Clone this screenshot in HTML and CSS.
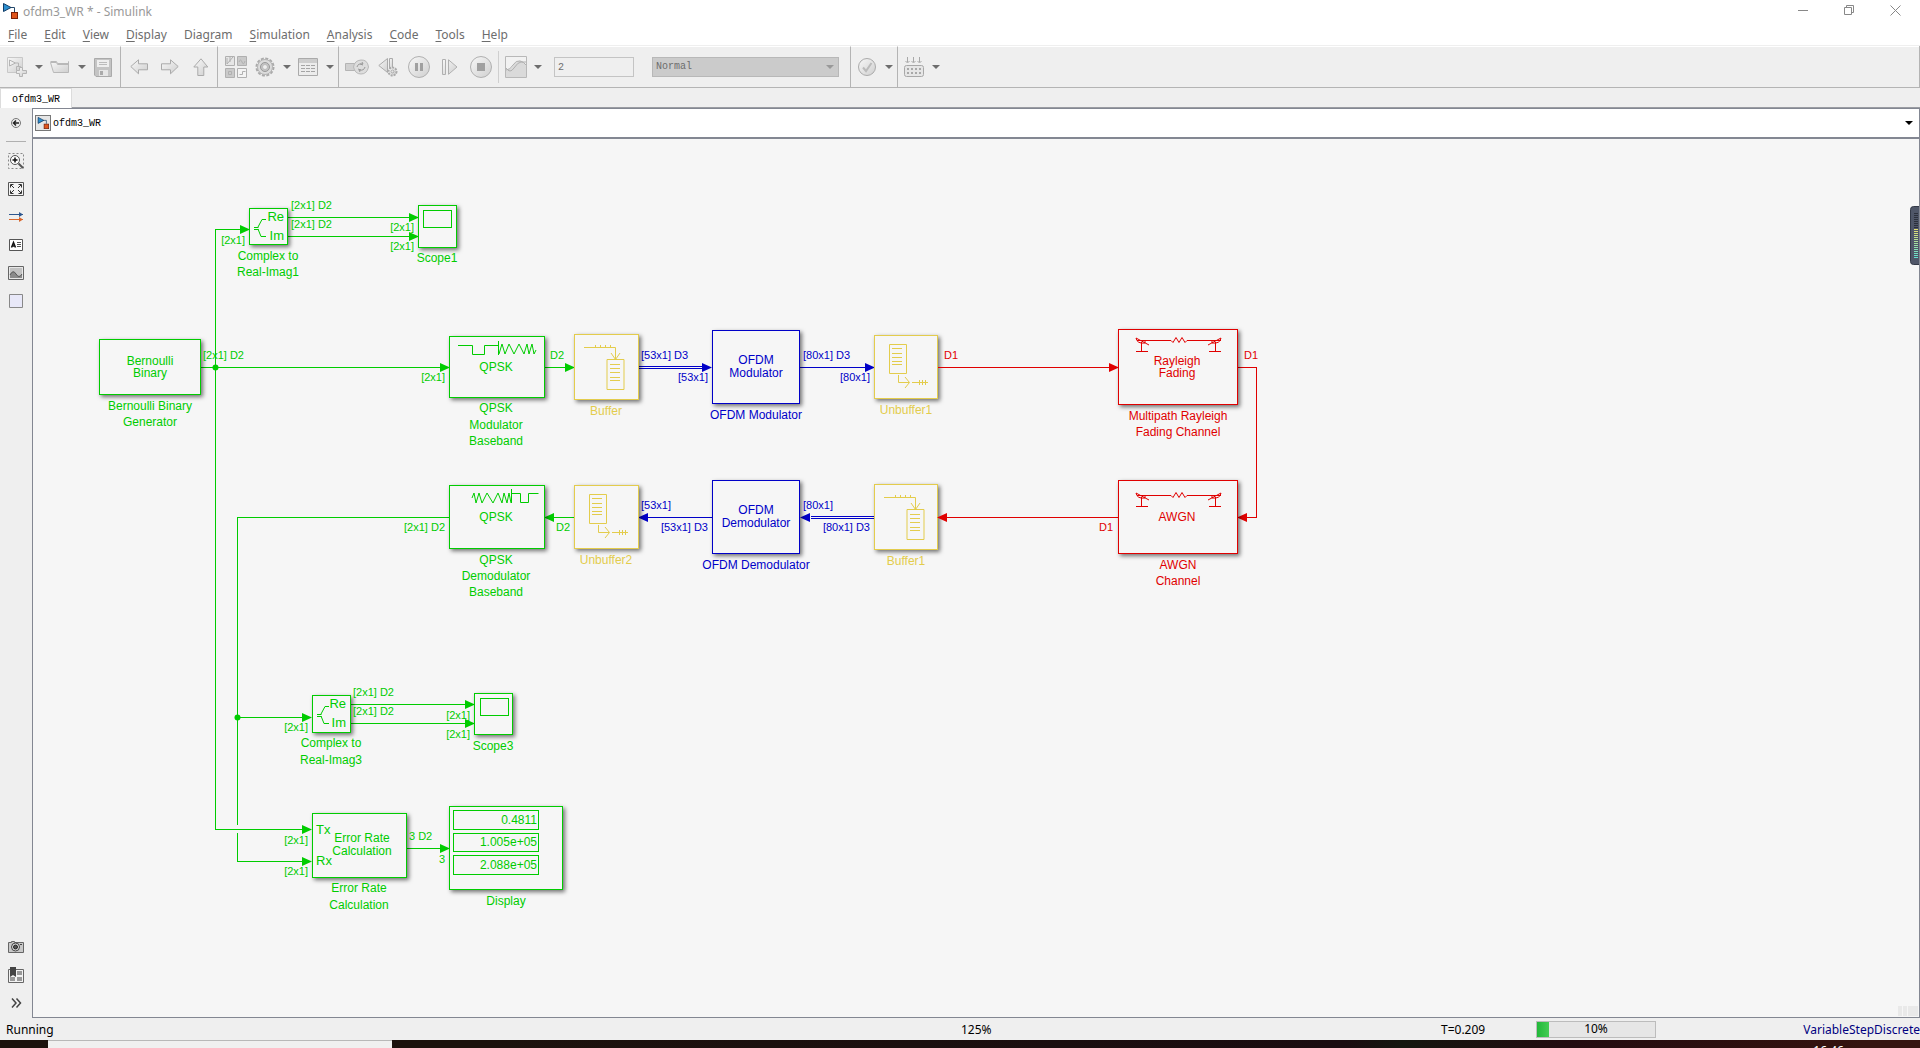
FILE: index.html
```html
<!DOCTYPE html>
<html lang="en">
<head>
<meta charset="utf-8">
<title>ofdm3_WR * - Simulink</title>
<link rel="stylesheet" href="styles.css">
</head>
<body>
<svg class="defs" aria-hidden="true">
  <defs>
    <linearGradient id="soft" x1="0" y1="0" x2="1" y2="1"><stop offset="0" stop-color="#f8f8f8"/><stop offset="1" stop-color="#cfcfcf"/></linearGradient>
    <linearGradient id="meterfill" x1="0" y1="0" x2="0" y2="1"><stop offset="0" stop-color="#e8e070"/><stop offset="1" stop-color="#60e0d0"/></linearGradient>
    <symbol id="logo" viewBox="0 0 16 16"><path d="M8 4.500h4.500V9" fill="none" stroke="#24486a"/><path d="M1.500 .5v8L9 4.500z" fill="#2b8fd0" stroke="#123c66"/><rect x="9.500" y="9.500" width="6" height="6" fill="#e0551c" stroke="#7a2008"/></symbol>
    <symbol id="caret" viewBox="0 0 8 4"><path d="M0 0h8L4 4z" fill="currentColor"/></symbol>
    <symbol id="complex" viewBox="0 0 39 37" overflow="visible"><path d="M4 19.500h4.500M4 21.500h4.500M8 19l4-7.500h4M8 21l3 7.500h5" fill="none" stroke="currentColor"/></symbol>
    <symbol id="buffer" viewBox="0 0 64 65" overflow="visible"><path d="M10 13.500h31.500v12M37 19l4.500 6.500L46 19M21.500 11v2M26.500 11v2M31.500 11v2M36.500 11v2M33 25.500h17v30H33zM36 30.500h10M36 34.500h10M36 38.500h10M36 43.500h10M36 46.500h10" fill="none" stroke="currentColor"/></symbol>
    <symbol id="unbuffer" viewBox="0 0 64 63" overflow="visible"><path d="M15.500 9.500h17v29h-17zM18 13.500h10M18 18.500h10M18 22.500h10M18 26.500h10M18 29.500h10M24.500 40v7.500H35M31 42l4.500 5.500L31 53M38 47.500h16M45.500 45v5M48.500 45v5M51.500 45v5" fill="none" stroke="currentColor"/></symbol>
    <symbol id="channel" viewBox="0 0 86 14" overflow="visible"><path d="M1 2.500h34l2 2 3-5 3 5 3-5 3 5 2-2h34M0 0l13 7M0 0q1 6 9 5M9 5V2M5.500 4v9M0 13.500h12M85 0L72 7M85 0q-1 6-9 5M76 5V2M79.500 4v9M73 13.500h12" fill="none" stroke="currentColor"/></symbol>
  </defs>
</svg>

<header class="titlebar">
  <svg class="app-icon" width="16" height="16"><use href="#logo"/></svg>
  <h1 class="title">ofdm3_WR * - Simulink</h1>
  <div class="window-buttons">
    <button aria-label="Minimize"><svg width="11" height="11"><path d="M0 5.500h10" stroke="#888" fill="none"/></svg></button>
    <button aria-label="Restore"><svg width="11" height="11"><path d="M.5 2.500h7v7h-7zM2.500 2.500v-2h7v7h-2" stroke="#888" fill="none"/></svg></button>
    <button aria-label="Close"><svg width="11" height="11"><path d="M.5 .5l10 10M10.500 .5l-10 10" stroke="#888" fill="none"/></svg></button>
  </div>
</header>

<nav class="menubar">
  <a href="#file"><u>F</u>ile</a>
  <a href="#edit"><u>E</u>dit</a>
  <a href="#view"><u>V</u>iew</a>
  <a href="#display"><u>D</u>isplay</a>
  <a href="#diagram">Diag<u>r</u>am</a>
  <a href="#simulation"><u>S</u>imulation</a>
  <a href="#analysis"><u>A</u>nalysis</a>
  <a href="#code"><u>C</u>ode</a>
  <a href="#tools"><u>T</u>ools</a>
  <a href="#help"><u>H</u>elp</a>
</nav>

<div class="toolbar">
  <div class="group group-file">
    <button class="tool" aria-label="New model"><svg width="20" height="20" fill="url(#soft)" stroke="#b4b4b4"><path d="M.5 .5h15v15H.5z" stroke="#c8c8c8"/><path d="M2.500 3v6l6-3zM8.500 6h3v3M9.500 9.500h4v4h-4z"/><path d="M12.500 10.500h3v3h4v3h-4v3h-3v-3h-3v-3h3z"/></svg></button>
    <button class="drop" aria-label="New options"><svg width="8" height="4"><use href="#caret"/></svg></button>
    <button class="tool" aria-label="Open"><svg width="21" height="14" fill="url(#soft)" stroke="#b8b8b8"><path d="M.5 1.500h6l1 2h11v2"/><path d="M18.500 1.500v11h-15l-3-10h6l1 2h11z"/></svg></button>
    <button class="drop" aria-label="Open options"><svg width="8" height="4"><use href="#caret"/></svg></button>
    <button class="tool" aria-label="Save"><svg width="18" height="19"><path d="M.5 .5h17v18H2l-1.500-1.500z" fill="#c4c4c4" stroke="#aaa"/><path d="M3 2h12v7H3z" fill="#eee"/><path d="M5 4.500h8M5 6.500h8" stroke="#bbb"/><path d="M5 12h9v6H5z" fill="#e6e6e6"/><path d="M6 13h3v4H6z" fill="#aaa"/></svg></button>
  </div>
  <div class="group">
    <button class="tool wide" aria-label="Back"><svg width="18" height="16" fill="url(#soft)" stroke="#aaa"><path d="M.8 7.500L8.500 .8v4h9v6h-9v4z"/></svg></button>
    <button class="tool wide" aria-label="Forward"><svg width="18" height="16" fill="url(#soft)" stroke="#aaa"><path d="M17.200 7.500L9.500 .8v4h-9v6h9v4z"/></svg></button>
    <button class="tool wide" aria-label="Up to parent"><svg width="16" height="18" fill="url(#soft)" stroke="#aaa"><path d="M8 .8L.8 9h4v8.500h6V9h4z"/></svg></button>
  </div>
  <div class="group">
    <button class="tool wide" aria-label="Library browser"><svg width="22" height="22" fill="none" stroke="#b0b0b0"><path d="M.5 .5h9v9h-9z" fill="#e6e6e6"/><path d="M12.500 .5h9v9h-9zM.5 12.500h9v9h-9z" fill="#cacaca"/><path d="M12.500 12.500h9v9h-9z" fill="#f4f4f4"/><path d="M2 2v6l6-7M5 1v5M3.500 15.500h3v3h-3zM14.500 18.500h3v-3h3M14 6q1.500-4 3 0t3-1"/></svg></button>
    <button class="tool" aria-label="Model configuration"><svg width="20" height="20" fill="none"><circle cx="10" cy="10" r="8.500" stroke="#aaa" stroke-width="2" stroke-dasharray="3 1.450"/><circle cx="10" cy="10" r="7.500" fill="#dcdcdc" stroke="#b4b4b4"/><circle cx="10" cy="10" r="4.500" fill="#c4c4c4" stroke="#999"/><circle cx="10" cy="10" r="2.500" fill="#eee" stroke="#bbb"/></svg></button>
    <button class="drop" aria-label="Configuration options"><svg width="8" height="4"><use href="#caret"/></svg></button>
    <button class="tool" aria-label="Model explorer"><svg width="20" height="18"><path d="M.5 .5h19v17H.5z" fill="#ececec" stroke="#aaa"/><path d="M1 1h18v4H1z" fill="#cdcdcd"/><path d="M3 7.500h14M3 10.500h14M3 13.500h14" stroke="#a4a4a4" stroke-dasharray="4 1"/></svg></button>
    <button class="drop" aria-label="Explorer options"><svg width="8" height="4"><use href="#caret"/></svg></button>
  </div>
  <div class="group group-run">
    <button class="tool wide" aria-label="Update diagram"><svg width="24" height="16"><path d="M.5 4.500h11v7H.5z" fill="#d0d0d0" stroke="#b4b4b4"/><path d="M8.500 8q1-6.500 7.500-7t7.500 7q-1.500 7-7.500 7T8.500 8z" fill="#ddd" stroke="#b8b8b8"/><path d="M12 8q1-4 6-3l-1-2M20 8q-1 4-6 3l1 2M15 5l3 1M16 11l-3-1" fill="none" stroke="#999"/></svg></button>
    <button class="tool wide" aria-label="Step back"><svg width="20" height="20" fill="url(#soft)" stroke="#aaa"><path d="M9.500 1.500v14L.8 8.500z"/><path d="M11.500 1.500h3v10h-3z"/><circle cx="14.500" cy="14.500" r="4" stroke-width="2" stroke-dasharray="2 1"/><circle cx="14.500" cy="14.500" r="1.500"/></svg></button>
    <button class="tool wide" aria-label="Pause"><svg width="22" height="22"><circle cx="11" cy="11" r="10.500" fill="url(#soft)" stroke="#b0b0b0"/><path d="M7 7h3v8H7zM12 7h3v8h-3z" fill="#a0a0a0"/></svg></button>
    <button class="tool wide" aria-label="Step forward"><svg width="16" height="16" fill="url(#soft)" stroke="#b0b0b0"><path d="M.5 .5h3v15h-3zM6.500 .8v14.500L15 8z"/></svg></button>
    <button class="tool wide" aria-label="Stop"><svg width="22" height="22"><circle cx="11" cy="11" r="10.500" fill="url(#soft)" stroke="#b0b0b0"/><path d="M7 7h8v8H7z" fill="#a0a0a0"/></svg></button>
    <span class="rule"></span>
    <button class="tool" aria-label="Data inspector"><svg width="22" height="22" fill="none"><path d="M.5 .5h21v21H.5z" fill="#f2f2f2"/><path d="M1 21V14q5 0 8-6 4-5 8-3 4 2 4 5v11z" fill="#dadada"/><path d="M.5 .5h21v21H.5z" stroke="#b8b8b8"/><path d="M1 14q4 0 7-5t7-4 6 4M1 12q4 6 8 0t7-6 5 0" stroke="#b0b0b0"/></svg></button>
    <button class="drop" aria-label="Inspector options"><svg width="8" height="4"><use href="#caret"/></svg></button>
    <input class="stop-time" type="text" value="2" aria-label="Simulation stop time" disabled>
    <div class="mode"><select aria-label="Simulation mode" disabled><option>Normal</option></select><svg width="8" height="4"><use href="#caret"/></svg></div>
  </div>
  <div class="group">
    <button class="tool" aria-label="Model advisor"><svg width="18" height="18"><circle cx="9" cy="9" r="8.500" fill="url(#soft)" stroke="#aaa"/><path d="M5 9.500l3 3.500 5.500-8" fill="none" stroke="#bbb" stroke-width="2"/></svg></button>
    <button class="drop" aria-label="Advisor options"><svg width="8" height="4"><use href="#caret"/></svg></button>
  </div>
  <div class="group group-build">
    <button class="tool" aria-label="Build model"><svg width="20" height="20" fill="none" stroke="#a8a8a8"><path d="M3.500 0v5M9.500 0v5M15.500 0v5M1.500 4l2 2 2-2M7.500 4l2 2 2-2M13.500 4l2 2 2-2"/><rect x=".5" y="8.500" width="19" height="11" rx="2" fill="#e6e6e6"/><path d="M3 12h14M3 16h14" stroke-width="2" stroke-dasharray="2 2"/></svg></button>
    <button class="drop" aria-label="Build options"><svg width="8" height="4"><use href="#caret"/></svg></button>
  </div>
</div>

<div class="tabs"><a class="tab" href="#ofdm3_WR">ofdm3_WR</a></div>

<main class="workspace">
  <aside class="palette">
    <button aria-label="Hide browser"><svg width="12" height="12"><circle cx="6" cy="6" r="4.500" fill="#eee" stroke="#777"/><path d="M9 6H4M6 3.500L3.500 6 6 8.500" fill="none" stroke="#222" stroke-width="1.500"/></svg></button>
    <span class="divider"></span>
    <button aria-label="Zoom"><svg width="16" height="16" fill="none"><path d="M.5 .5h15v15H.5z" stroke="#888" stroke-dasharray="2 2"/><circle cx="7" cy="7" r="4.500" fill="#fff" stroke="#555"/><path d="M4.500 7h5M7 4.500v5" stroke="#111" stroke-width="1.500"/><path d="M10.500 10.500l4.500 4.500" stroke="#555" stroke-width="2"/></svg></button>
    <button aria-label="Fit to view"><svg width="16" height="14" fill="none"><path d="M.5 .5h15v13H.5z" fill="#f4f4f4" stroke="#555"/><path d="M2.500 5.500v-3h3M10.500 2.500h3v3M13.500 8.500v3h-3M5.500 11.500h-3v-3M3 3l3 3M13 3l-3 3M13 11l-3-3M3 11l3-3" stroke="#333"/></svg></button>
    <button aria-label="Sample time legend"><svg width="15" height="10" fill="none"><path d="M0 2.500h14" stroke="#2d568e"/><path d="M10 0l4 2.500L10 5z" fill="#2d568e"/><path d="M0 7.500h14" stroke="#d8672c"/><path d="M10 5l4 2.500-4 2.500z" fill="#d8672c"/></svg></button>
    <button aria-label="Annotation"><svg width="14" height="12" fill="none"><path d="M.5 .5h13v11H.5z" fill="#fff" stroke="#555"/><path d="M2.500 8.500l2-5 2 5M3 7h3" stroke="#111" stroke-width="1.500"/><path d="M8 3.500h4M8 5.500h4M8 7.500h4" stroke="#555"/></svg></button>
    <button aria-label="Image"><svg width="16" height="14" fill="none"><path d="M.5 .5h15v13H.5z" fill="#e8e8e8" stroke="#666"/><path d="M2 2h12v10H2z" fill="#c2c2c2"/><path d="M2 9q3-6 6-1t6 0v4H2z" fill="#8a8a8a"/><path d="M2 9q3-6 6-1t6 0" stroke="#555"/></svg></button>
    <button aria-label="Area"><svg width="14" height="14"><path d="M.5 .5h13v13H.5z" fill="#e8e8f8" stroke="#888"/></svg></button>
    <span class="spring"></span>
    <button aria-label="Screenshot"><svg width="16" height="12"><path d="M.5 1.500h3v-1h3v1h9v10H.5z" fill="#c8c8c8" stroke="#666"/><circle cx="7.500" cy="6" r="4" fill="#ddd" stroke="#444"/><circle cx="7.500" cy="6" r="2" fill="#555" stroke="#222"/><path d="M12 3h2v1h-2z" fill="#444"/></svg></button>
    <button aria-label="Viewmarks"><svg width="16" height="16"><path d="M.5 2.500h15v13H.5z" fill="#f2f2f2" stroke="#666"/><path d="M9 4h5v4H9zM9 10h5v4H9zM2 10h5v4H2z" fill="#999"/><path d="M2 0h6v10L5 8l-3 2z" fill="#444"/></svg></button>
    <button aria-label="More"><svg width="11" height="10" fill="none" stroke="#444" stroke-width="1.500"><path d="M1 .5L5 5 1 9.500M5.500 .5l4 4.500-4 4.500"/></svg></button>
  </aside>

  <section class="editor">
    <div class="breadcrumb">
      <span class="crumb-icon"><svg width="12" height="12"><use href="#logo"/></svg></span>
      <span class="crumb">ofdm3_WR</span>
      <button aria-label="Path history"><svg width="8" height="4"><use href="#caret"/></svg></button>
    </div>
    <div class="canvas">
      <svg class="diagram" width="1252" height="800" viewBox="33 139 1252 800">
        <g class="green">
          <g class="wires">
            <path d="M201 367.500h240M241 229.500h-25.500v600H304M288 217.500h121M288 236.500h121M545 367.500h21M575 517.500h-22M451 517.500H237.500V825M237.500 833v28.500H304M237.500 717.500H304M351 704.500h115M351 723.500h115M407 848.500h34"/>
          </g>
          <g class="heads">
            <path d="M240 225l10 4.500-10 4.500zM409 213l10 4.500-10 4.500zM409 232l10 4.500-10 4.500zM440 363l10 4.500-10 4.500zM565 363l10 4.500-10 4.500zM554 513l-10 4.500 10 4.500zM302 713l10 4.500-10 4.500zM465 700l10 4.500-10 4.500zM465 719l10 4.500-10 4.500zM302 825l10 4.500-10 4.500zM302 857l10 4.500-10 4.500zM440 844l10 4.500-10 4.500z"/>
            <circle cx="215.500" cy="367.500" r="3"/><circle cx="237.500" cy="717.500" r="3"/>
          </g>
          <g class="blocks">
            <rect x="249.500" y="208.500" width="38" height="36"/>
            <rect x="418.500" y="205.500" width="38" height="42"/>
            <rect x="99.500" y="339.500" width="101" height="55"/>
            <rect x="449.500" y="336.500" width="95" height="61"/>
            <rect x="449.500" y="485.500" width="95" height="63"/>
            <rect x="312.500" y="695.500" width="38" height="37"/>
            <rect x="474.500" y="693.500" width="38" height="41"/>
            <rect x="312.500" y="813.500" width="94" height="64"/>
            <rect x="449.500" y="806.500" width="113" height="83"/>
          </g>
          <g class="marks">
            <path class="crisp" d="M423.500 210.500h28v17h-28zM480.500 698.500h28v17h-28zM453.500 810.500h85v19h-85zM453.500 833.500h85v18h-85zM453.500 855.500h85v19h-85z"/>
            <path d="M458 345.500h14.500v9h12v-9h14M498.500 341v14M499 354l3-10 3 10 4-10 5 10 5-10 5 10 3-10 2 10 3-10 2 10 2-4"/>
            <path d="M472 498l2-5 2 10 3-10 3 10 5-10 6 10 5-10 4 10 2-10 3 10 2-10 2 10M511.500 489v14M511.500 493.500h9v9h8v-9h10"/>
            <use href="#complex" x="250" y="208" width="39" height="37"/>
            <use href="#complex" x="313" y="695" width="39" height="37"/>
          </g>
          <g class="ports">
            <text x="284" y="221" class="end">Re</text><text x="284" y="240" class="end">Im</text>
            <text x="346" y="708" class="end">Re</text><text x="346" y="727" class="end">Im</text>
            <text x="316" y="834">Tx</text><text x="316" y="865">Rx</text>
          </g>
          <g class="names">
            <text x="268" y="260">Complex to</text><text x="268" y="276">Real-Imag1</text>
            <text x="437" y="262">Scope1</text>
            <text x="150" y="365">Bernoulli</text><text x="150" y="377">Binary</text>
            <text x="150" y="410">Bernoulli Binary</text><text x="150" y="426">Generator</text>
            <text x="496" y="371">QPSK</text>
            <text x="496" y="412">QPSK</text><text x="496" y="429">Modulator</text><text x="496" y="445">Baseband</text>
            <text x="496" y="521">QPSK</text>
            <text x="496" y="564">QPSK</text><text x="496" y="580">Demodulator</text><text x="496" y="596">Baseband</text>
            <text x="331" y="747">Complex to</text><text x="331" y="764">Real-Imag3</text>
            <text x="493" y="750">Scope3</text>
            <text x="362" y="842">Error Rate</text><text x="362" y="855">Calculation</text>
            <text x="359" y="892">Error Rate</text><text x="359" y="909">Calculation</text>
            <text x="537" y="824" class="end">0.4811</text><text x="537" y="846" class="end">1.005e+05</text><text x="537" y="869" class="end">2.088e+05</text>
            <text x="506" y="905">Display</text>
          </g>
          <g class="signals">
            <text x="291" y="209">[2x1] D2</text><text x="291" y="228">[2x1] D2</text>
            <text x="245" y="244" class="end">[2x1]</text>
            <text x="414" y="231" class="end">[2x1]</text><text x="414" y="250" class="end">[2x1]</text>
            <text x="203" y="359">[2x1] D2</text><text x="445" y="381" class="end">[2x1]</text>
            <text x="550" y="359">D2</text><text x="556" y="531">D2</text>
            <text x="445" y="531" class="end">[2x1] D2</text>
            <text x="353" y="696">[2x1] D2</text><text x="353" y="715">[2x1] D2</text>
            <text x="308" y="731" class="end">[2x1]</text>
            <text x="470" y="719" class="end">[2x1]</text><text x="470" y="738" class="end">[2x1]</text>
            <text x="308" y="844" class="end">[2x1]</text><text x="308" y="875" class="end">[2x1]</text>
            <text x="409" y="840">3 D2</text><text x="439" y="863">3</text>
          </g>
        </g>

        <g class="blue">
          <g class="wires"><path d="M639 366.500h65M639 368.500h65M800 367.500h66M712 517.500h-65M876 516.500h-65M876 518.500h-65"/></g>
          <g class="heads"><path d="M702 363l10 4.500-10 4.500zM865 363l10 4.500-10 4.500zM648 513l-10 4.500 10 4.500zM810 513l-10 4.500 10 4.500z"/></g>
          <g class="blocks">
            <rect x="712.500" y="330.500" width="87" height="73"/>
            <rect x="712.500" y="480.500" width="87" height="73"/>
          </g>
          <g class="names">
            <text x="756" y="364">OFDM</text><text x="756" y="377">Modulator</text><text x="756" y="419">OFDM Modulator</text>
            <text x="756" y="514">OFDM</text><text x="756" y="527">Demodulator</text><text x="756" y="569">OFDM Demodulator</text>
          </g>
          <g class="signals">
            <text x="641" y="359">[53x1] D3</text><text x="708" y="381" class="end">[53x1]</text>
            <text x="803" y="359">[80x1] D3</text><text x="870" y="381" class="end">[80x1]</text>
            <text x="641" y="509">[53x1]</text><text x="708" y="531" class="end">[53x1] D3</text>
            <text x="803" y="509">[80x1]</text><text x="870" y="531" class="end">[80x1] D3</text>
          </g>
        </g>

        <g class="gold">
          <g class="blocks">
            <rect x="574.500" y="334.500" width="64" height="65"/>
            <rect x="574.500" y="485.500" width="64" height="63"/>
            <rect x="874.500" y="335.500" width="63" height="63"/>
            <rect x="874.500" y="484.500" width="63" height="65"/>
          </g>
          <use href="#buffer" x="574" y="334" width="64" height="65"/>
          <use href="#buffer" x="874" y="484" width="64" height="65"/>
          <use href="#unbuffer" x="574" y="485" width="64" height="63"/>
          <use href="#unbuffer" x="874" y="335" width="64" height="63"/>
          <g class="names">
            <text x="606" y="415">Buffer</text><text x="606" y="564">Unbuffer2</text>
            <text x="906" y="414">Unbuffer1</text><text x="906" y="565">Buffer1</text>
          </g>
        </g>

        <g class="red">
          <g class="wires"><path d="M938 367.500h172M1238 367.500h18.500v150H1247M1119 517.500H947"/></g>
          <g class="heads"><path d="M1109 363l10 4.500-10 4.500zM1247 513l-10 4.500 10 4.500zM947 513l-10 4.500 10 4.500z"/></g>
          <g class="blocks">
            <rect x="1118.500" y="329.500" width="119" height="75"/>
            <rect x="1118.500" y="480.500" width="119" height="73"/>
          </g>
          <use href="#channel" x="1136" y="338" width="86" height="14"/>
          <use href="#channel" x="1136" y="493" width="86" height="14"/>
          <g class="names">
            <text x="1177" y="365">Rayleigh</text><text x="1177" y="377">Fading</text>
            <text x="1178" y="420">Multipath Rayleigh</text><text x="1178" y="436">Fading Channel</text>
            <text x="1177" y="521">AWGN</text><text x="1178" y="569">AWGN</text><text x="1178" y="585">Channel</text>
          </g>
          <g class="signals">
            <text x="944" y="359">D1</text><text x="1244" y="359">D1</text><text x="1113" y="531" class="end">D1</text>
          </g>
        </g>
      </svg>
      <svg class="meter" width="10" height="60" aria-hidden="true"><rect x=".5" y=".5" width="14" height="58" rx="3" fill="#4f5668" stroke="#333947"/><path d="M6 7v16" stroke="#2c303c" stroke-width="4" stroke-dasharray="1 1"/><path d="M4 23h4v29H4z" fill="url(#meterfill)"/><path d="M6 24v28" stroke="#4f5668" stroke-width="4" stroke-dasharray="1 1"/></svg>
      <div class="grip"><i></i><i></i><i class="grip-wide"></i></div>
    </div>
  </section>
</main>

<footer class="status">
  <span class="status-state">Running</span>
  <span>125%</span>
  <span>T=0.209</span>
  <div class="progress"><progress id="run" value="10" max="100"></progress><label for="run">10%</label></div>
  <a class="solver" href="#solver">VariableStepDiscrete</a>
</footer>
<div class="taskbar"><div class="task"></div><span class="clock">16:46</span></div>
</body>
</html>
```
FILE: styles.css
```css
* { box-sizing: border-box; }

body {
  margin: 0;
  height: 100vh;
  display: flex;
  flex-direction: column;
  overflow: hidden;
  background: #efefef;
  color: #000;
  font: 12px/16px "Noto Sans", "Open Sans", sans-serif;
}

button {
  padding: 0;
  border: 0;
  background: none;
  color: inherit;
  display: flex;
  align-items: center;
  justify-content: center;
}

a { color: inherit; text-decoration: none; }
svg { display: block; flex: none; }
.defs { position: absolute; width: 0; height: 0; }

/* Title and menus */
.titlebar {
  flex: none;
  height: 24px;
  display: flex;
  align-items: flex-start;
  padding: 3px 19px 0 2px;
  background: #fff;
}
.title {
  margin: 0 auto 0 5px;
  font-size: 12px;
  line-height: 18px;
  font-weight: 400;
  color: #999;
}
.window-buttons { display: flex; gap: 35px; padding-top: 2px; }

.menubar {
  flex: none;
  height: 22px;
  display: flex;
  gap: 17px;
  padding: 3px 8px 0;
  background: #fff;
  border-bottom: 1px solid #efefef;
  color: #6d6d6d;
}
.menubar u { text-underline-offset: 2px; }

/* Toolbar */
.toolbar {
  flex: none;
  height: 42px;
  display: flex;
  border-bottom: 1px solid #b4b4b4;
  border-right: 1px solid #b4b4b4;
  color: #6d6d6d;
}
.group {
  display: flex;
  align-items: center;
  padding: 0 1px 0 2px;
  border-top: 1px solid #fff;
  border-right: 1px solid #b4b4b4;
}
.group-file { padding: 0 3px; }
.group-run { padding-right: 11px; }
.group-build { flex: 1; border-right: 0; }
.tool { width: 28px; height: 28px; }
.tool.wide { width: 31px; }
.drop { width: 15px; height: 28px; }
.rule { width: 1px; height: 32px; margin: 0 3px 0 2px; background: #cfcfcf; }

.stop-time, .mode select {
  height: 20px;
  padding: 0 3px;
  border: 1px solid #c4c4c4;
  border-radius: 0;
  background: #efefef;
  color: #6d6d6d;
  font: 10px/16px "Liberation Mono", monospace;
  opacity: 1;
}
.stop-time { width: 80px; margin: 0 18px 0 9px; }
.mode { position: relative; width: 187px; }
.mode select {
  display: block;
  width: 100%;
  background: #cbcbcb;
  border-color: #b8b8b8;
  appearance: none;
}
.mode svg { position: absolute; right: 5px; top: 8px; color: #999; }

/* Model tabs */
.tabs {
  flex: none;
  height: 20px;
  display: flex;
  border-bottom: 1px solid #9a9ca2;
}
.tab {
  height: 20px;
  padding: 3px 11px 0;
  border: 1px solid #dcdcdc;
  border-bottom: 0;
  background: #fff;
  font: 10px/16px "Liberation Mono", monospace;
}

/* Workspace */
.workspace { flex: 1; min-height: 0; display: flex; }
.palette {
  flex: none;
  width: 32px;
  display: flex;
  flex-direction: column;
  padding: 1px 0;
}
.palette button { height: 28px; flex: none; }
.divider { flex: none; height: 1px; margin: 4px 6px 5px; background: #b0b0b0; }
.spring { flex: 1; }

.editor {
  flex: 1;
  min-width: 0;
  display: flex;
  flex-direction: column;
  border: 1px solid #838792;
}
.breadcrumb {
  flex: none;
  height: 30px;
  display: flex;
  align-items: center;
  gap: 2px;
  padding: 0 6px 0 2px;
  background: #fff;
  border-bottom: 2px solid #838792;
  font: 10px/16px "Liberation Mono", monospace;
}
.crumb-icon {
  padding: 1px;
  border: 1px solid #777;
  background: #e6e6e6;
}
.crumb { flex: 1; padding-top: 2px; }
.breadcrumb button { height: 20px; }

.canvas {
  position: relative;
  flex: 1;
  min-height: 0;
  overflow: hidden;
  background: #f6f6f6;
}

/* Block diagram */
.green { color: #00cc00; }
.blue { color: #0000c8; }
.gold { color: #e3cc4c; }
.red { color: #e00000; }
.wires path, .marks path { fill: none; stroke: currentColor; }
.wires path, .crisp { shape-rendering: crispEdges; }
.heads { fill: currentColor; }
.blocks rect {
  fill: #f6f6f6;
  stroke: currentColor;
  filter: drop-shadow(2px 2px 2px rgba(0, 0, 0, .55));
}
.diagram text { fill: currentColor; font-family: "Liberation Sans", Arial, sans-serif; }
.names text { font-size: 12px; text-anchor: middle; }
.ports text { font-size: 13px; }
.signals text { font-size: 11px; }
.diagram text.end { text-anchor: end; }

.meter { position: absolute; right: -1px; top: 67px; }
.grip { position: absolute; right: 1px; bottom: 1px; display: flex; gap: 1px; }
.grip i { width: 4px; height: 10px; background: #e9e9e9; }
.grip .grip-wide { width: 10px; }

/* Status bar */
.status {
  flex: none;
  height: 22px;
  display: grid;
  grid-template-columns: 50% 25% 5% 120px 1fr;
  align-items: center;
  padding-top: 1px;
}
.status > span { padding-left: 1px; }
.status .status-state { padding-left: 6px; }
.progress { position: relative; height: 17px; }
.progress progress {
  display: block;
  width: 100%;
  height: 17px;
  border: 1px solid #bcbcbc;
  background: #e6e6e6;
  appearance: none;
}
.progress progress::-webkit-progress-bar { background: #e6e6e6; }
.progress progress::-webkit-progress-value { background: linear-gradient(90deg, #22b83a, #44cc54); }
.progress label { position: absolute; inset: 0; text-align: center; }
.solver { text-align: right; color: #00007f; }

.taskbar {
  flex: none;
  height: 8px;
  display: flex;
  justify-content: space-between;
  padding: 0 76px 0 48px;
  overflow: hidden;
  background: linear-gradient(90deg, #1c120d, #1c120d 25%, #1a0c10 70%, #14160f 73%, #240b10 82%, #35130f 97%);
}
.task { width: 344px; border-top: 1px solid #b8b8b8; background: #f0f0f0; }
.clock { padding-top: 3px; color: #fff; }
```
